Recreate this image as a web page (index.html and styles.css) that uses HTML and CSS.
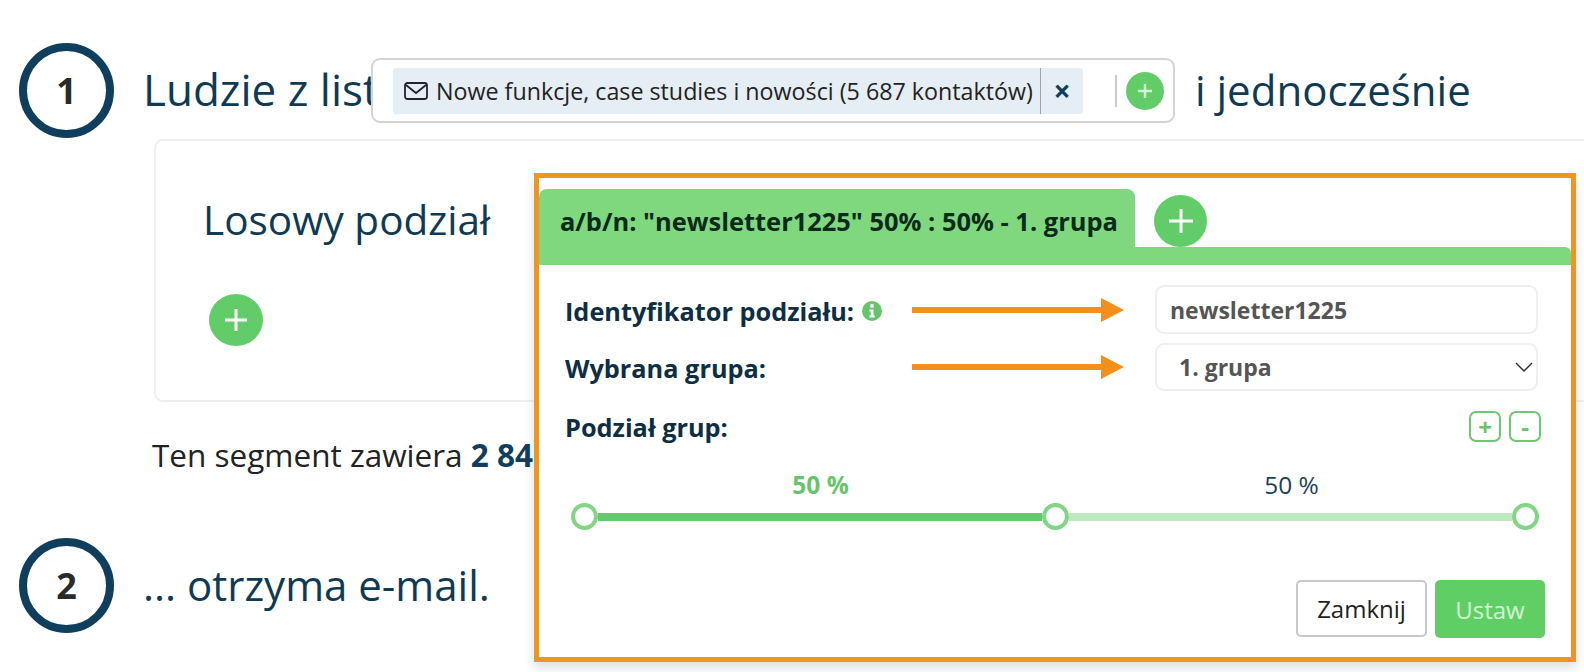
FILE: index.html
```html
<!DOCTYPE html>
<html lang="pl">
<head>
<meta charset="utf-8">
<title>Losowy podział</title>
<link rel="stylesheet" href="styles.css">
</head>
<body>
<main class="page">
  <section class="step">
    <div class="step-num">1</div>
    <h2 class="step-title">
      <span class="title-text title-start">Ludzie z listy</span>
      <div class="tagbox">
        <div class="chip">
          <svg class="mail" viewBox="0 0 24 18" width="24" height="18"><rect x="1" y="1" width="22" height="16" rx="2.5" fill="none" stroke="#223" stroke-width="1.8"/><path d="M2 3l10 8 10-8" fill="none" stroke="#223" stroke-width="1.8"/></svg>
          <span class="chip-text">Nowe funkcje, case studies i nowości (5 687 kontaktów)</span>
          <span class="chip-x">×</span>
        </div>
        <span class="tag-sep"></span>
        <span class="round-add small"><svg viewBox="0 0 16 16" width="16" height="16"><path d="M8 1v14M1 8h14" stroke="#d5f3d6" stroke-width="2.4"/></svg></span>
      </div>
      <span class="title-text title-end">i jednocześnie</span>
    </h2>
  </section>

  <section class="card">
    <h3 class="card-title">Losowy podział</h3>
    <span class="round-add card-add"><svg viewBox="0 0 24 24" width="24" height="24"><path d="M12 1v22M1 12h22" stroke="#fff" stroke-width="3"/></svg></span>
  </section>

  <p class="summary">Ten segment zawiera <strong>2 84</strong></p>

  <section class="step step-two">
    <div class="step-num">2</div>
    <h2 class="step-title"><span class="title-text">... otrzyma e-mail.</span></h2>
  </section>
</main>

<aside class="panel">
  <div class="tabs">
    <div class="tab">a/b/n: "newsletter1225" 50% : 50% - 1. grupa</div>
    <span class="round-add tab-add"><svg viewBox="0 0 24 24" width="24" height="24"><path d="M12 0v24M0 12h24" stroke="#fff" stroke-width="3"/></svg></span>
  </div>
  <div class="tab-bar"></div>

  <div class="form">
    <div class="row row-id">
      <label class="label">Identyfikator podziału:
        <svg class="info" viewBox="0 0 20 20" width="20" height="20"><circle cx="10" cy="10" r="10" fill="#67c46d"/><circle cx="10" cy="5" r="2" fill="#fff"/><path d="M7.5 8.5h4v6h1.300v2H7.400v-2h1.400v-4H7.500z" fill="#fff"/></svg>
      </label>
      <svg class="arrow" viewBox="0 0 212 24" width="212" height="24"><rect x="0" y="9" width="192" height="6" fill="#f58f1c"/><polygon points="189,0 212,12 189,24" fill="#f58f1c"/></svg>
      <input class="control" type="text" value="newsletter1225">
    </div>
    <div class="row row-group">
      <label class="label">Wybrana grupa:</label>
      <svg class="arrow" viewBox="0 0 212 24" width="212" height="24"><rect x="0" y="9" width="192" height="6" fill="#f58f1c"/><polygon points="189,0 212,12 189,24" fill="#f58f1c"/></svg>
      <div class="control select">
        <span>1. grupa</span>
        <svg viewBox="0 0 18 10" width="18" height="10"><path d="M1 1l8 8 8-8" fill="none" stroke="#333" stroke-width="1.500"/></svg>
      </div>
    </div>
    <div class="row row-split">
      <label class="label label-split">Podział grup:</label>
      <div class="mini-group">
        <button class="mini" type="button">+</button>
        <button class="mini" type="button">-</button>
      </div>
    </div>
    <div class="percents">
      <span class="pct active">50 %</span>
      <span class="pct">50 %</span>
    </div>
    <div class="slider">
      <span class="handle"></span>
      <span class="track on"></span>
      <span class="handle"></span>
      <span class="track"></span>
      <span class="handle"></span>
    </div>
  </div>

  <div class="footer">
    <button class="btn close" type="button">Zamknij</button>
    <button class="btn save" type="button">Ustaw</button>
  </div>
</aside>
</body>
</html>
```

FILE: styles.css
```css
* { box-sizing: border-box; }
html, body { margin: 0; height: 672px; overflow: hidden; background: #fff; }
body { font-family: "Open Sans", "Liberation Sans", sans-serif; color: #222; position: relative; width: 1584px; }

.page { padding: 43px 0 0 19px; }

.step { display: flex; align-items: center; height: 95px; gap: 29px; }
.step-num {
  width: 95px; height: 95px; flex: none;
  border: 8px solid #0f3f5c; border-radius: 50%;
  display: flex; align-items: center; justify-content: center;
  font-size: 36px; font-weight: 700; color: #2a2a2a;
}
.step-title { margin: 0; display: flex; align-items: center; font-size: 42px; font-weight: 400; color: #0f3a54; white-space: nowrap; line-height: 57px; }
.title-text { padding-bottom: 2px; }
.title-start { width: 228px; overflow: visible; font-size: 44px; }
.title-end { margin-left: 20px; }

.tagbox {
  width: 804px; height: 65px; flex: none;
  display: flex; align-items: center;
  position: relative; background: #fff;
  border: 2px solid #d4d4d4; border-radius: 9px;
  padding-left: 20px;
}
.chip {
  width: 690px; height: 46px; flex: none;
  display: flex; align-items: center;
  background: #e6eef5; border-radius: 3px; padding-left: 11px;
  font-size: 23.25px; color: #222;
}
.mail { flex: none; }
.chip-text { margin-left: 8px; width: 605px; flex: none; height: 46px; line-height: 46px; border-right: 1px solid #9aa6ae; }
.chip-x { flex: 1; text-align: center; font-weight: 700; font-size: 30px; line-height: 46px; color: #0f3f5c; }
.tag-sep { width: 2px; height: 32px; background: #ccc; margin-left: 32px; }
.round-add { display: flex; align-items: center; justify-content: center; background: #62cd68; border-radius: 50%; flex: none; }
.round-add.small { width: 38px; height: 38px; margin-left: 9px; }

.card {
  margin: 1px -20px 0 135px; height: 263px;
  border: 2px solid #efefef; border-radius: 9px;
  padding: 51px 0 0 47px;
}
.card-title { margin: 0; font-size: 40.5px; font-weight: 400; line-height: 56px; color: #0f3a54; }
.card-add { width: 54px; height: 52px; margin: 46px 0 0 6px; }

.summary { margin: 32px 0 0 133px; font-size: 31.5px; line-height: 42px; color: #222; }
.summary strong { color: #0f3f5c; font-weight: 700; }

.step-two { margin-top: 62px; }

.panel {
  position: absolute; left: 534px; top: 173px;
  width: 1042px; height: 489px;
  border: 5px solid #f0951f;
  background: #fff;
  box-shadow: 0 6px 10px rgba(60, 80, 90, .18);
  padding-top: 11px;
}
.tabs { display: flex; align-items: flex-end; height: 58px; }
.tab {
  width: 596px; height: 58px;
  background: #7fd87e; border-radius: 8px 8px 0 0;
  padding-left: 21px;
  font-size: 25.45px; font-weight: 700; line-height: 64px; color: #0b2a1c; white-space: nowrap;
}
.tab-add { width: 53px; height: 52px; margin-left: 19px; }
.tab-bar { height: 18px; background: #7fd87e; border-radius: 0 6px 0 0; }

.form { padding: 20px 30px 0 26px; }
.row { display: flex; align-items: center; }
.row-id { height: 49px; }
.row-group { height: 48px; margin-top: 9px; }
.row-split { height: 31px; margin-top: 20px; justify-content: space-between; }
.label { width: 347px; flex: none; font-size: 25.3px; font-weight: 700; color: #0d2e43; display: flex; align-items: center; gap: 8px; padding-top: 2px; white-space: nowrap; }
.label-split { padding-top: 0; }
.arrow { flex: none; }
.control {
  width: 383px; height: 100%; flex: none; margin-left: 31px;
  border: 2px solid #efefef; border-radius: 9px; background: #fff;
  font-family: inherit; font-size: 23px; font-weight: 700; color: #555;
  padding: 0 13px; outline: none;
}
.select { display: flex; align-items: center; justify-content: space-between; padding: 0 3px 0 22px; }
.info { flex: none; }

.mini-group { display: flex; gap: 8px; }
.mini {
  width: 32px; height: 31px; padding: 0;
  border: 2px solid #6cc971; border-radius: 7px; background: #fff;
  font-family: inherit; font-size: 24px; font-weight: 700; line-height: 26px; color: #67c46d;
}

.percents { display: grid; grid-template-columns: 1fr 1fr; width: 942px; margin: 27px 0 0 20px; }
.pct { text-align: center; font-size: 24.5px; line-height: 32px; color: #1c3f55; }
.pct.active { font-weight: 700; color: #67c46d; }

.slider { display: flex; align-items: center; margin: 2px 0 0 6px; width: 968px; height: 27px; }
.handle { width: 27px; height: 27px; flex: none; border: 4px solid #82d585; border-radius: 50%; background: #fff; }
.track { flex: 1; height: 8px; background: #bfe9c0; }
.track.on { background: #66c86c; }

.footer { display: flex; justify-content: flex-end; align-items: flex-start; gap: 8px; padding-right: 26px; margin-top: 50px; }
.btn { font-family: inherit; font-size: 24px; border-radius: 5px; padding: 0; }
.close { width: 131px; height: 57px; background: #fff; border: 2px solid #c9c9c9; color: #222; }
.save { width: 110px; height: 58px; background: #5fcf65; border: 0; color: #d6f5d7; }
```
